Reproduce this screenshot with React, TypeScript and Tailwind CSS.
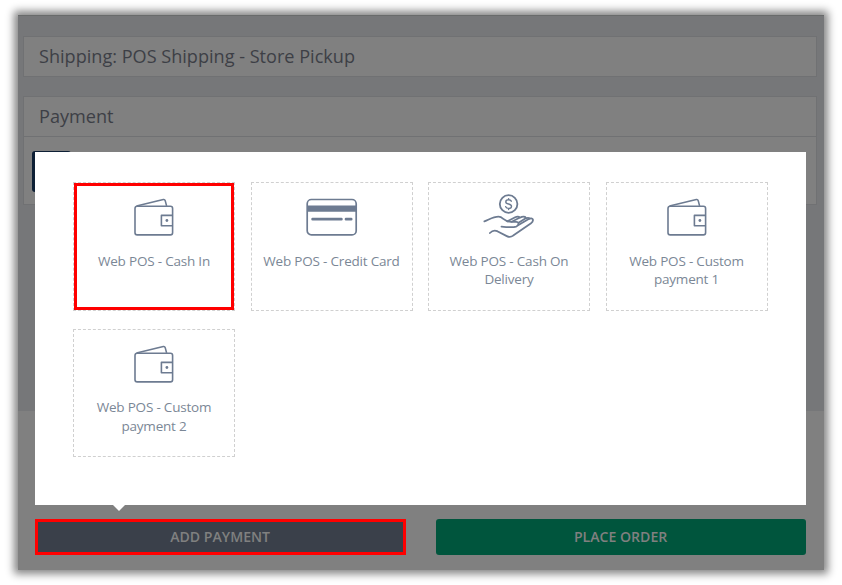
import type { ReactNode } from "react";

function WalletIcon() {
  return (
    <svg width="40" height="38" viewBox="0 0 40 38" fill="none" stroke="#6d7b91" strokeWidth="1.6" strokeLinejoin="round">
      <rect x="1" y="8.3" width="37.6" height="28.6" rx="2.2" />
      <path d="M2.5 8 29.3 1.5Q30.8 1.2 31.2 2.6L32.6 7.9" />
      <path d="M38.5 17.4H27.4V27.8H38.5" />
      <circle cx="32.9" cy="22.5" r="1.4" fill="#6d7b91" stroke="none" />
    </svg>
  );
}

function CardIcon() {
  return (
    <svg width="52" height="38" viewBox="0 0 52 38" fill="none" stroke="#6d7b91" strokeWidth="1.7">
      <rect x="1.2" y="1.5" width="49" height="35.4" rx="4.2" />
      <path d="M1 10.7H50.4" strokeWidth="6.2" />
      <path d="M6.6 21.2H35.4M40 21.2H45.2" strokeWidth="2.7" strokeLinecap="round" />
    </svg>
  );
}

function HandIcon() {
  return (
    <svg width="52" height="46" viewBox="0 0 52 46" fill="none" stroke="#6d7b91" strokeWidth="1.8" strokeLinecap="round" strokeLinejoin="round">
      <circle cx="25.6" cy="10" r="8.8" />
      <path d="M28.3 7.2C27.7 6.1 26.7 5.8 25.6 5.8C24 5.8 22.8 6.6 22.8 7.9C22.8 10.8 28.5 9.1 28.5 12.2C28.5 13.6 27.2 14.4 25.6 14.4C24.3 14.4 23.2 13.8 22.7 12.7M25.6 4.6V5.8M25.6 14.4V15.6" strokeWidth="1.4" />
      <path d="M1.4 27.4C6.3 25.6 9.9 22.7 15.5 22.7C20.6 22.7 20.3 27.8 27.9 27.8H33.1C36.3 27.8 36.2 31.5 33.1 32.6C29.5 33.7 23.5 33.1 18.5 32.6" />
      <path d="M6.9 39C9.3 36.5 11.5 36 14.3 37.2L23.8 42.1C26.1 43.3 28.3 43 30.2 41.6L47.7 29.6C51.8 26.2 49.7 22.9 45.7 25L35.5 31" />
      <path d="M24.4 27.4 32.2 23.3C34.4 22.2 36.2 22.7 36.5 23.8L28.7 27.7M36.5 23.8 38.8 22.9C41.4 22 43.2 23.3 42.3 24.5L36 28.6M42.3 24.5C44.3 23.6 46 23.7 46.7 24.6" />
    </svg>
  );
}

const methods: { name: string; icon: ReactNode; selected?: boolean }[] = [
  { name: "Web POS - Cash In", icon: <WalletIcon />, selected: true },
  { name: "Web POS - Credit Card", icon: <CardIcon /> },
  { name: "Web POS - Cash On Delivery", icon: <HandIcon /> },
  { name: "Web POS - Custom payment 1", icon: <WalletIcon /> },
  { name: "Web POS - Custom payment 2", icon: <WalletIcon /> },
];

function PaymentPopup() {
  return (
    <div className="absolute top-[137.4px] left-[17px] h-[352.6px] w-[770.5px] bg-white pt-[30px] pl-[38px]">
      <div className="grid grid-cols-[repeat(4,162px)] gap-x-[15.5px] gap-y-[18px]">
        {methods.map((m) => (
          <div key={m.name} className="relative flex h-[128.5px] flex-col items-center border border-dashed border-[#d0d0d0] text-center">
            <div className="flex h-[68px] items-center">{m.icon}</div>
            <div className="mt-[0.6px] w-[140px] text-[13.5px] leading-[18.3px] tracking-[-0.2px] text-[#7b8796]">{m.name}</div>
            {m.selected && <div className="absolute inset-0 border-3 border-[#ff0000]" />}
          </div>
        ))}
      </div>
      <div className="absolute top-full left-[78px] h-[6px] w-[12px] bg-white [clip-path:polygon(0_0,100%_0,50%_100%)]" />
    </div>
  );
}

export default function App() {
  return (
    <div className="h-[585px] w-[842px] overflow-hidden bg-white pt-[15px] pl-[18px] font-['Open_Sans',sans-serif]">
      <div className="relative flex h-[555px] w-[806px] flex-col bg-[#808080] shadow-[0_0_8px_4px_rgba(0,0,0,0.48)]">
        <div className="h-[396px] border-t border-[#696b6b] bg-[#767779] px-[5px] pt-[20px]">
          <div className="flex h-[41px] w-[794px] items-center border border-[#707173] bg-[#808080] pt-px pl-[15px] text-[18.1px] text-[#3d3f46]">
            Shipping: POS Shipping - Store Pickup
          </div>
          <div className="mt-[19px] h-[109px] w-[794px] border border-[#707173] bg-[#808080]">
            <div className="flex h-[40px] items-center border-b border-[#707173] pl-[15px] text-[18.1px] text-[#3d3f46]">Payment</div>
            <div className="mt-[14px] ml-[8px] h-[41px] w-[39px] rounded-[3px] bg-[#0d1f35]" />
          </div>
        </div>
        <div className="mt-[108px] flex gap-[30px] pl-[16.6px] text-[14.1px] font-semibold text-[#808080]">
          <div className="flex h-[36px] w-[371px] items-center justify-center border-3 border-[#ff0000] bg-[#3a404a]">ADD PAYMENT</div>
          <div className="flex h-[36px] w-[370px] items-center justify-center rounded-[3px] bg-[#00553d]">PLACE ORDER</div>
        </div>
        <PaymentPopup />
      </div>
    </div>
  );
}
